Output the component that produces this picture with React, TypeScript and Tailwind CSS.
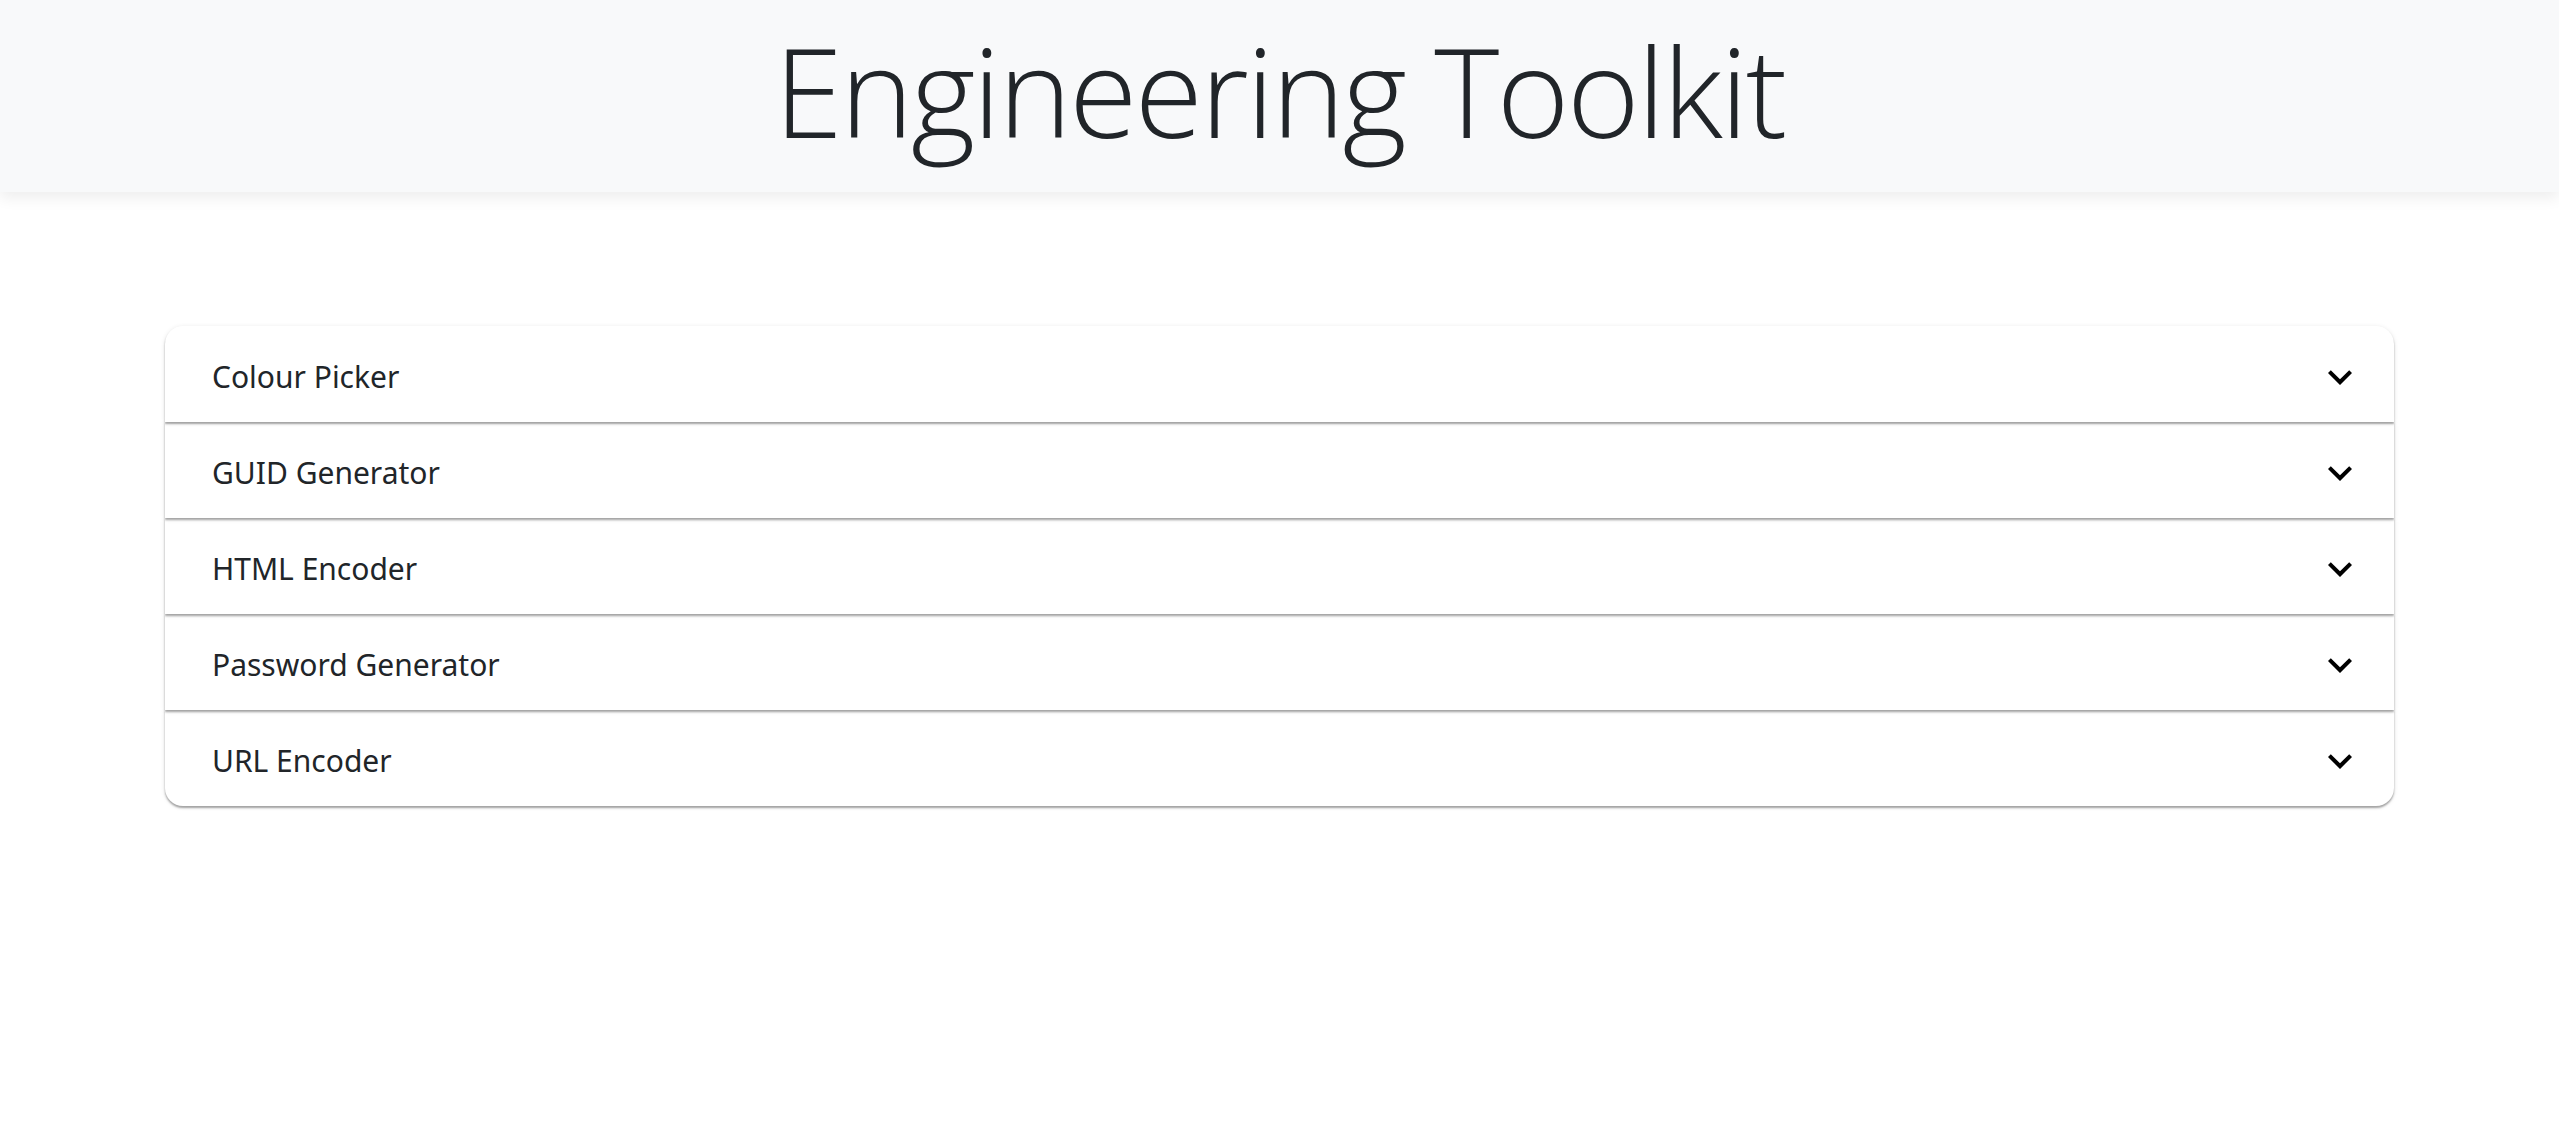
const tools = [
  "Colour Picker",
  "GUID Generator",
  "HTML Encoder",
  "Password Generator",
  "URL Encoder",
];

const zs = ["z-50", "z-40", "z-30", "z-20", "z-10"];

function ExpandMore() {
  return (
    <svg width="48" height="48" viewBox="0 0 24 24" className="shrink-0">
      <path d="M16.59 8.59 12 13.17 7.41 8.59 6 10l6 6 6-6z" fill="#000" />
    </svg>
  );
}

export default function App() {
  return (
    <div className="min-h-screen bg-white font-['Noto_Sans',sans-serif] text-[#212529]">
      <header className="relative z-[60] flex h-[192px] items-center justify-center bg-[#f8f9fa] shadow-[0_6px_14px_rgba(0,0,0,0.07)]">
        <h1 className="font-['Open_Sans',sans-serif] text-[124px] font-light leading-none tracking-[-0.02em] pb-[12px]">
          Engineering Toolkit
        </h1>
      </header>

      <main className="px-[165px] pt-[134px]">
        <div className="flex flex-col">
          {tools.map((t, i) => (
            <div
              key={t}
              className={`relative ${zs[i]} flex h-[96px] items-center justify-between bg-white pl-[47px] pr-[30px] pt-[6px] shadow-[0_2px_2px_rgba(0,0,0,0.32),0_1px_5px_rgba(0,0,0,0.1)] ${
                i === 0 ? "rounded-t-[18px]" : ""
              } ${i === tools.length - 1 ? "rounded-b-[18px]" : ""}`}
            >
              <span className="text-[30px] leading-none">{t}</span>
              <ExpandMore />
            </div>
          ))}
        </div>
      </main>
    </div>
  );
}
